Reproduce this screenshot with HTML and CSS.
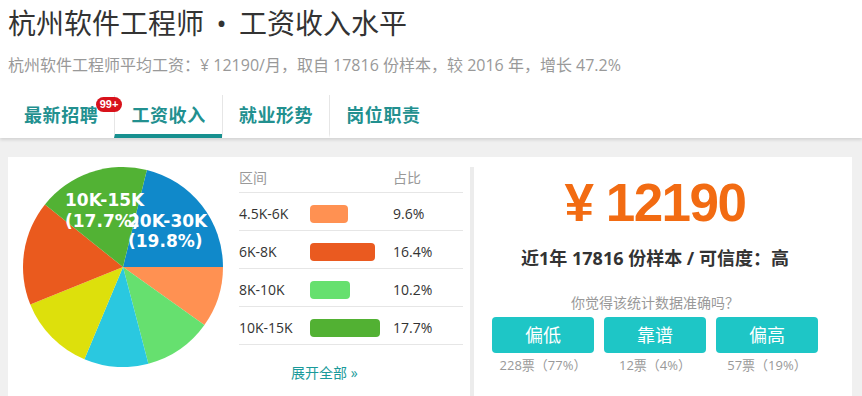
FILE: index.html
```html
<!DOCTYPE html>
<html lang="zh-CN">
<head>
    <meta charset="UTF-8">
    <meta name="viewport" content="width=device-width, initial-scale=1.0">
    <title>杭州软件工程师 • 工资收入水平</title>
    <link rel="stylesheet" href="styles.css">
</head>
<body>
    <div class="page-head">
        <h1 class="title">杭州软件工程师 <span class="dot">•</span> 工资收入水平</h1>
        <p class="subtitle">杭州软件工程师平均工资：¥ 12190/月，取自 17816 份样本，较 2016 年，增长 47.2%</p>
        <ul class="tabs">
            <li class="tab">最新招聘<span class="badge">99+</span></li>
            <li class="tab active">工资收入</li>
            <li class="tab">就业形势</li>
            <li class="tab">岗位职责</li>
        </ul>
    </div>

    <div class="content">
        <div class="card">
            <!-- 左侧：饼图 + 区间表 -->
            <div class="dist">
                <svg class="pie" width="200" height="200" viewBox="0 0 200 200">
                    <path d="M100,100 L123.85,2.89 A100,100 0 0,1 200,100 Z" fill="#1089ca"/>
                    <path d="M100,100 L200,100 A100,100 0 0,1 181.41,158.07 Z" fill="#ff9152"/>
                    <path d="M100,100 L181.41,158.07 A100,100 0 0,1 125.38,196.73 Z" fill="#66e06f"/>
                    <path d="M100,100 L125.38,196.73 A100,100 0 0,1 61.41,192.25 Z" fill="#2ac8e0"/>
                    <path d="M100,100 L61.41,192.25 A100,100 0 0,1 7.28,137.46 Z" fill="#dde00c"/>
                    <path d="M100,100 L7.28,137.46 A100,100 0 0,1 21.96,37.48 Z" fill="#ea5a1e"/>
                    <path d="M100,100 L21.96,37.48 A100,100 0 0,1 123.85,2.89 Z" fill="#52b234"/>
                    <text class="pie-label" x="42" y="39">10K-15K</text>
                    <text class="pie-label" x="42" y="60">(17.7%)</text>
                    <text class="pie-label" x="105" y="60">20K-30K</text>
                    <text class="pie-label" x="105" y="80">(19.8%)</text>
                </svg>

                <div class="range-table">
                    <div class="row head">
                        <span class="col-range">区间</span>
                        <span class="col-bar"></span>
                        <span class="col-pct">占比</span>
                    </div>
                    <div class="row">
                        <span class="col-range">4.5K-6K</span>
                        <span class="col-bar"><i class="bar c1" style="width:38px"></i></span>
                        <span class="col-pct">9.6%</span>
                    </div>
                    <div class="row">
                        <span class="col-range">6K-8K</span>
                        <span class="col-bar"><i class="bar c2" style="width:65px"></i></span>
                        <span class="col-pct">16.4%</span>
                    </div>
                    <div class="row">
                        <span class="col-range">8K-10K</span>
                        <span class="col-bar"><i class="bar c3" style="width:40px"></i></span>
                        <span class="col-pct">10.2%</span>
                    </div>
                    <div class="row">
                        <span class="col-range">10K-15K</span>
                        <span class="col-bar"><i class="bar c4" style="width:70px"></i></span>
                        <span class="col-pct">17.7%</span>
                    </div>
                    <a class="more" href="#">展开全部 »</a>
                </div>
            </div>

            <!-- 右侧：平均工资 + 投票 -->
            <div class="summary">
                <div class="avg">¥ 12190</div>
                <div class="samples">近1年 17816 份样本 / 可信度：高</div>
                <div class="question">你觉得该统计数据准确吗？</div>
                <div class="votes">
                    <div class="vote">
                        <button class="vote-btn">偏低</button>
                        <span class="vote-count">228票（77%）</span>
                    </div>
                    <div class="vote">
                        <button class="vote-btn">靠谱</button>
                        <span class="vote-count">12票（4%）</span>
                    </div>
                    <div class="vote">
                        <button class="vote-btn">偏高</button>
                        <span class="vote-count">57票（19%）</span>
                    </div>
                </div>
            </div>
        </div>
    </div>
</body>
</html>
```

FILE: styles.css
```css
body {
    font-family: "Open Sans", "Noto Sans CJK SC", sans-serif;
    background-color: #f0f0f0;
    margin: 0;
    color: #333;
}

/* 顶部标题区 */
.page-head {
    background-color: #fff;
    padding: 5px 8px 0;
    box-shadow: 0 2px 3px rgba(0, 0, 0, 0.12);
}

.title {
    margin: 0;
    font-size: 28px;
    line-height: 36px;
    font-weight: normal;
    color: #333;
}

.title .dot {
    margin: 0 5px;
}

.subtitle {
    margin: 12px 0 0;
    font-size: 16px;
    line-height: 24px;
    color: #999;
}

.tabs {
    list-style: none;
    margin: 18px 0 0;
    padding: 0;
    display: flex;
}

.tab {
    position: relative;
    padding: 1px 16px 0 16px;
    font-size: 18px;
    line-height: 38px;
    font-weight: bold;
    letter-spacing: 0.6px;
    color: #22908f;
    border-bottom: 4px solid transparent;
    cursor: pointer;
}

.tab + .tab {
    border-left: 1px solid #e6e6e6;
}

.tab.active {
    border-bottom-color: #17908f;
}

.badge {
    position: absolute;
    top: 2px;
    right: -8px;
    z-index: 2;
    height: 15px;
    padding: 0 4px;
    border-radius: 8px;
    background-color: #d8121b;
    color: #fff;
    font-family: "Liberation Sans", sans-serif;
    font-size: 11px;
    line-height: 15px;
    font-weight: bold;
    letter-spacing: 0;
}

/* 内容卡片 */
.content {
    padding: 19px 10px 0 8px;
}

.card {
    background-color: #fff;
    display: flex;
    height: 260px;
}

.dist {
    width: 447px;
    padding: 10px 0 0 15px;
    display: flex;
}

.pie {
    flex-shrink: 0;
}

.pie-label {
    font-family: "DejaVu Sans", sans-serif;
    font-size: 17px;
    font-weight: bold;
    fill: #fff;
}

.range-table {
    margin-left: 16px;
    width: 224px;
}

.row {
    display: flex;
    align-items: center;
    padding-top: 4px;
    box-sizing: border-box;
    height: 38px;
    border-bottom: 1px solid #e6e6e6;
    font-size: 14px;
    line-height: 20px;
}

.row.head {
    height: 26px;
    padding: 0 0 4px;
    color: #999;
}

.col-range {
    width: 71px;
}

.col-bar {
    width: 83px;
}

.bar {
    display: block;
    height: 18px;
    border-radius: 4px;
}

.c1 { background-color: #ff9152; }
.c2 { background-color: #ea5a20; }
.c3 { background-color: #66e06f; }
.c4 { background-color: #52b133; }

.more {
    display: block;
    margin-top: 18px;
    padding-left: 52px;
    font-size: 14px;
    line-height: 20px;
    color: #1a9a9a;
    text-decoration: none;
}

/* 右侧汇总 */
.summary {
    flex: 1;
    margin-top: 10px;
    border-left: 4px solid #ececec;
    padding-right: 16px;
    text-align: center;
}

.avg {
    margin-top: 8px;
    font-family: "Liberation Sans", sans-serif;
    font-size: 53px;
    line-height: 56px;
    font-weight: bold;
    letter-spacing: -1.5px;
    color: #f26b12;
}

.samples {
    margin-top: 14px;
    font-size: 18px;
    line-height: 26px;
    font-weight: bold;
    color: #333;
}

.question {
    margin-top: 22px;
    font-size: 14px;
    line-height: 20px;
    color: #999;
}

.votes {
    display: flex;
    justify-content: center;
    gap: 10px;
    margin-top: 4px;
}

.vote {
    width: 102px;
}

.vote-btn {
    display: block;
    width: 102px;
    height: 36px;
    border: none;
    border-radius: 4px;
    background-color: #1ec6c6;
    color: #fff;
    font-family: inherit;
    font-size: 18px;
    line-height: 36px;
    padding: 0;
    cursor: pointer;
}

.vote-count {
    display: block;
    margin-top: 3px;
    font-size: 13px;
    line-height: 18px;
    color: #999;
    white-space: nowrap;
}
```
